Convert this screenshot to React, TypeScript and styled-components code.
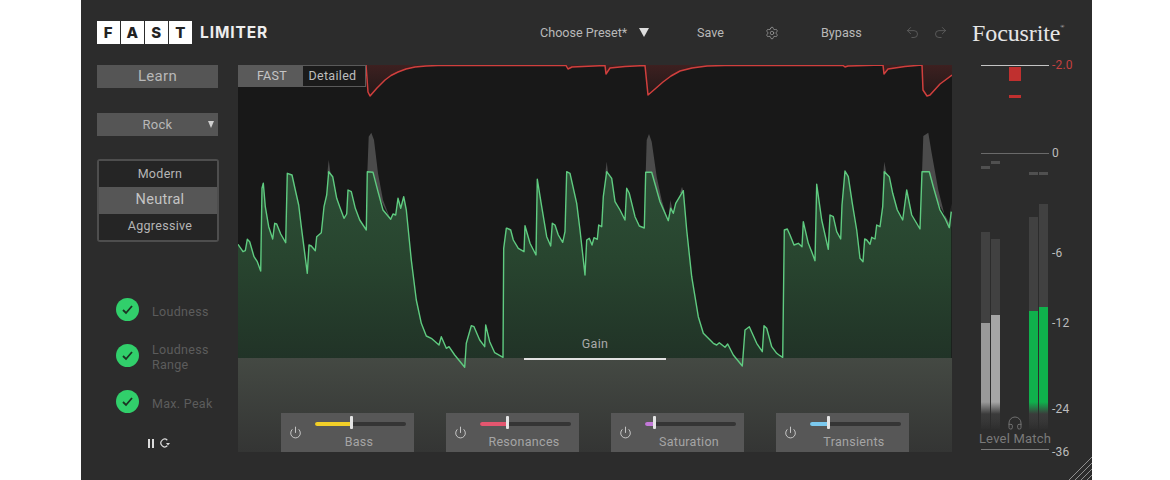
import React from 'react';
import styled, { createGlobalStyle } from 'styled-components';
import { Headphones, Power, Redo2, Settings, Undo2 } from 'lucide-react';

const GlobalStyle = createGlobalStyle`
  body {
    margin: 0;
    background: #ffffff;
    font-family: Roboto, "Liberation Sans", sans-serif;
  }
`;

const Panel = styled.div`
  width: 1011px;
  height: 480px;
  margin-left: 81px;
  background: #2c2c2c;
  color: #bdbdbd;
  overflow: hidden;
  position: relative;
`;

/* ---------- header ---------- */

const Header = styled.header`
  height: 65px;
  display: flex;
  align-items: center;
  padding-left: 16px;
  box-sizing: border-box;
`;

const Logo = styled.div`
  display: flex;
  align-items: center;
  width: 443px;
`;

const Tile = styled.span`
  width: 22.5px;
  height: 23px;
  margin-right: 1.5px;
  background: #ffffff;
  color: #222222;
  font-family: Inter, sans-serif;
  font-weight: 800;
  font-size: 15px;
  line-height: 23px;
  text-align: center;
`;

const LogoWord = styled.span`
  margin-left: 7px;
  color: #eeeeee;
  font-family: Inter, sans-serif;
  font-weight: 700;
  font-size: 15.5px;
  letter-spacing: 0.9px;
`;

const HeaderText = styled.span<{ $width: number }>`
  width: ${(p) => p.$width}px;
  font-size: 12.6px;
  color: #b9b9b9;
  white-space: nowrap;
`;

const PresetArrow = styled.span`
  width: 0;
  height: 0;
  margin-right: 48px;
  border-left: 5px solid transparent;
  border-right: 5px solid transparent;
  border-top: 9px solid #dddddd;
`;

const GearIcon = styled(Settings)`
  width: 14px;
  height: 14px;
  margin-right: 42px;
  color: #a5a5a5;
`;

const HistoryIcon = styled.span`
  display: flex;
  width: 28px;
  color: #626262;
`;

const Brand = styled.span`
  margin-left: 11px;
  padding-top: 1px;
  font-family: "Liberation Serif", serif;
  font-size: 24px;
  color: #e6e6e6;
  letter-spacing: -0.1px;
  sup {
    font-size: 5px;
    vertical-align: 13px;
    line-height: 0;
  }
`;

const Body = styled.div`
  display: flex;
  height: 415px;
`;

/* ---------- left column ---------- */

const LeftColumn = styled.aside`
  width: 157px;
  padding-left: 16px;
  box-sizing: border-box;
`;

const LearnButton = styled.div`
  width: 121px;
  height: 23px;
  background: #555555;
  color: #b8b8b8;
  font-size: 15px;
  line-height: 23px;
  text-align: center;
  letter-spacing: 0.3px;
`;

const GenreSelect = styled.div`
  position: relative;
  width: 121px;
  height: 23px;
  margin-top: 25px;
  background: #555555;
  color: #b8b8b8;
  font-size: 13px;
  line-height: 24px;
  text-align: center;
  letter-spacing: 0.3px;
`;

const GenreArrow = styled.span`
  position: absolute;
  right: 4px;
  top: 8px;
  border-left: 3.5px solid transparent;
  border-right: 3.5px solid transparent;
  border-top: 7px solid #d0d0d0;
`;

const ModeGroup = styled.div`
  width: 122px;
  margin-top: 23px;
  border: 2px solid #4e4e4e;
  border-radius: 3px;
  box-sizing: border-box;
  display: flex;
  flex-direction: column;
`;

const ModeOption = styled.div<{ $active?: boolean }>`
  height: ${(p) => (p.$active ? 27 : 26)}px;
  padding-left: 4px;
  background: ${(p) => (p.$active ? '#565656' : '#252525')};
  color: ${(p) => (p.$active ? '#c4c4c4' : '#b5b5b5')};
  font-size: ${(p) => (p.$active ? 14.5 : 12.5)}px;
  letter-spacing: 0.3px;
  text-align: center;
  line-height: 26px;
  &:last-child {
    line-height: 24px;
  }
`;

const CheckList = styled.div`
  margin-top: 56px;
  margin-left: 19px;
  display: flex;
  flex-direction: column;
  gap: 18px;
`;

const CheckRow = styled.div`
  display: flex;
  align-items: center;
  gap: 13px;
`;

const CheckDot = styled.span`
  width: 23px;
  height: 23px;
  border-radius: 50%;
  background: #31cf6b;
  display: flex;
  align-items: center;
  justify-content: center;
  flex: none;
`;

const CheckLabel = styled.span`
  padding-top: 3px;
  font-size: 12.5px;
  line-height: 15px;
  color: #5c5c5c;
  letter-spacing: 0.3px;
`;

const Transport = styled.div`
  margin-top: 25px;
  margin-left: 51px;
  display: flex;
  align-items: center;
  gap: 5px;
`;

/* ---------- display ---------- */

const Display = styled.main`
  position: relative;
  width: 714px;
  height: 387px;
  background: #181818;
  display: flex;
  flex-direction: column;
  justify-content: flex-end;
`;

const Band = styled.div`
  height: 94px;
  box-sizing: border-box;
  background: linear-gradient(#444943, #343534);
  display: flex;
  align-items: flex-end;
  gap: 32px;
  padding-left: 43px;
`;

const Graph = styled.svg`
  position: absolute;
  left: 0;
  top: 0;
  pointer-events: none;
`;

const ViewTabs = styled.div`
  position: absolute;
  left: 0;
  top: 0;
  display: flex;
  height: 22px;
  background: #5a5a5a;
`;

const ViewTab = styled.span<{ $active?: boolean }>`
  width: 64px;
  box-sizing: border-box;
  font-size: 12.5px;
  line-height: 20px;
  text-align: center;
  letter-spacing: 0.3px;
  padding: ${(p) => (p.$active ? '0 3px 0 0' : '0 0 0 4px')};
  color: ${(p) => (p.$active ? '#bdbdbd' : '#c5c5c5')};
  background: ${(p) => (p.$active ? '#1b1b1b' : 'none')};
  border: 1px solid #5a5a5a;
`;

const GainMarker = styled.div`
  position: absolute;
  left: 286px;
  top: 271px;
  width: 142px;
  height: 22px;
  border-bottom: 2px solid #e2e2e2;
  font-size: 12.5px;
  line-height: 16px;
  text-align: center;
  color: #aaaaaa;
  letter-spacing: 0.3px;
`;

const Card = styled.div`
  width: 133px;
  height: 39px;
  background: #575757;
  display: flex;
  align-items: center;
  box-sizing: border-box;
  padding-left: 8px;
`;

const PowerIcon = styled(Power)`
  width: 13px;
  height: 13px;
  color: #d5d5d5;
  flex: none;
`;

const CardBody = styled.div`
  align-self: flex-start;
  width: 91px;
  margin-left: 13px;
  padding-top: 9px;
  display: flex;
  flex-direction: column;
  align-items: stretch;
`;

const SliderTrack = styled.div`
  position: relative;
  height: 4px;
  background: #353535;
  border-radius: 2px;
`;

const SliderFill = styled.div<{ $color: string }>`
  height: 100%;
  background: ${(p) => p.$color};
  border-radius: 2px 0 0 2px;
`;

const SliderHandle = styled.div`
  position: absolute;
  top: -6px;
  width: 3px;
  height: 13px;
  margin-left: -1px;
  background: #e4e4e4;
  border-radius: 1px;
`;

const CardLabel = styled.div`
  margin-top: 8px;
  margin-left: -3px;
  font-size: 12.5px;
  line-height: 15px;
  text-align: center;
  letter-spacing: 0.3px;
  color: #a5a5a5;
`;

/* ---------- meters ---------- */

const MeterColumn = styled.aside`
  width: 140px;
  margin-top: -8px;
  padding-left: 29px;
  box-sizing: border-box;
`;

const ScaleRow = styled.div<{ $top?: number }>`
  display: flex;
  align-items: center;
  height: 16px;
  margin-top: ${(p) => p.$top || 0}px;
`;

const ScaleLine = styled.div<{ $color: string }>`
  width: 68px;
  height: 1px;
  background: ${(p) => p.$color};
`;

const ScaleValue = styled.span<{ $color?: string }>`
  margin-left: 3px;
  font-size: 12px;
  letter-spacing: 0.2px;
  color: ${(p) => p.$color || '#bdbdbd'};
`;

const ReductionBar = styled.div<{ $height: number; $top: number }>`
  width: 12px;
  height: ${(p) => p.$height}px;
  margin: ${(p) => p.$top}px 0 0 28px;
  background: #c0302f;
`;

const MeterStage = styled.div`
  position: relative;
  display: flex;
  height: 264px;
  margin-top: 5px;
`;

const MeterPair = styled.div<{ $width: number }>`
  display: flex;
  align-items: flex-start;
  gap: 1px;
  width: ${(p) => p.$width}px;
`;

const MeterBar = styled.div<{ $top: number }>`
  position: relative;
  width: 9px;
  height: calc(100% - ${(p) => p.$top}px);
  margin-top: ${(p) => p.$top}px;
  background: linear-gradient(#414141 0, #414141 calc(100% - 28px), rgba(65, 65, 65, 0) 100%);
`;

const MeterPeak = styled.div<{ $top: number }>`
  position: absolute;
  left: 0;
  top: ${(p) => p.$top}px;
  width: 100%;
  height: 3px;
  background: #505050;
`;

const MeterFill = styled.div<{ $top: number; $color: string }>`
  position: absolute;
  left: 0;
  right: 0;
  bottom: 0;
  top: ${(p) => p.$top}px;
  background: linear-gradient(
    ${(p) => p.$color} 0,
    ${(p) => p.$color} calc(100% - 28px),
    rgba(60, 60, 60, 0.7) calc(100% - 16px),
    rgba(60, 60, 60, 0) 100%
  );
`;

const ScaleColumn = styled.div`
  position: absolute;
  left: 71px;
  top: 0;
  bottom: 0;
`;

const Tick = styled.span<{ $top: number }>`
  position: absolute;
  left: 0;
  top: ${(p) => p.$top}px;
  font-size: 12px;
  line-height: 14px;
  letter-spacing: 0.2px;
  color: #bdbdbd;
  white-space: nowrap;
`;

const LevelMatch = styled.div`
  position: absolute;
  left: -2px;
  top: 249px;
  width: 72px;
  display: flex;
  flex-direction: column;
  align-items: center;
  color: #7a7a7a;
  font-size: 13px;
  line-height: 16px;
  letter-spacing: 0.2px;
  white-space: nowrap;
`;

const LevelLine = styled.div`
  width: 68px;
  height: 1px;
  margin-top: 2px;
  background: #7a7a7a;
`;

const ResizeGrip = styled.svg`
  position: absolute;
  right: 0;
  bottom: 0;
`;

/* ---------- graph data, read off the screenshot at 3x ---------- */

type Pt = [number, number];

const toDisplay = (pts: Pt[], ox: number): Pt[] =>
  pts.map(([x, y]) => [ox + x / 3, y / 3 - 5] as Pt);

const green: Pt[] = [
  ...toDisplay(
    [
      [0, 553], [15, 575], [22, 572], [28, 538], [35, 545], [48, 590], [58, 605], [68, 633], [72, 385], [76, 370],
      [82, 440], [92, 500], [104, 537], [110, 490], [116, 492], [128, 522], [143, 548], [148, 340], [162, 345],
      [172, 390], [182, 435], [190, 500], [208, 640], [213, 555], [220, 558], [232, 572], [236, 530], [250, 518],
      [258, 440], [266, 405], [272, 335], [284, 350], [296, 415], [305, 440], [318, 475], [326, 462], [330, 390],
      [340, 395], [352, 445], [365, 480], [385, 510], [388, 335], [405, 337], [420, 395], [435, 450], [458, 478],
      [465, 462], [473, 465], [480, 415], [488, 445], [497, 410], [505, 450], [520, 600], [535, 720], [550, 790],
      [565, 828], [580, 835], [603, 855], [610, 830], [625, 865], [633, 860], [650, 885], [680, 922], [685, 850],
      [700, 797], [708, 800], [725, 840], [740, 860], [743, 795], [755, 845], [770, 878], [795, 892], [797, 565],
      [805, 505],
    ],
    0,
  ),
  ...toDisplay(
    [
      [22, 505], [32, 510], [40, 540], [55, 565], [72, 575], [75, 497], [90, 550], [108, 585], [112, 358], [125, 440],
      [140, 530], [152, 558], [157, 490], [165, 495], [175, 525], [188, 547], [195, 515], [200, 335], [210, 340],
      [230, 430], [240, 510], [255, 645], [260, 540], [268, 535], [276, 555], [282, 533], [292, 538], [296, 495],
      [305, 500], [310, 410], [320, 335], [335, 355], [345, 425], [360, 450], [375, 480], [380, 385], [388, 400],
      [405, 470], [418, 498], [433, 504], [437, 337], [455, 337], [480, 425], [505, 482], [512, 445], [520, 460],
      [527, 430], [550, 392], [560, 510], [575, 650], [595, 770], [610, 820], [640, 850], [650, 855], [658, 848],
      [675, 862], [683, 852], [700, 885], [727, 918], [735, 810], [748, 800], [770, 850], [787, 875], [792, 797],
      [800, 805], [815, 860], [830, 880], [840, 887],
    ],
    262,
  ),
  ...toDisplay(
    [
      [128, 892], [133, 510], [142, 507], [150, 525], [162, 555], [175, 550], [186, 560], [190, 485], [205, 550],
      [215, 575], [225, 602], [230, 373], [245, 480], [265, 568], [270, 465], [280, 470], [290, 515], [302, 537],
      [306, 435], [315, 333], [325, 350], [337, 430], [350, 510], [360, 595], [369, 605], [374, 537], [380, 540],
      [390, 553], [395, 532], [405, 537], [410, 495], [420, 500], [428, 440], [433, 335], [448, 350], [458, 400],
      [472, 450], [488, 480], [500, 390], [515, 465], [540, 507], [546, 335], [568, 335], [580, 380], [600, 450],
      [615, 475], [628, 503], [634, 455],
    ],
    502,
  ),
];

const peaks: Pt[][] = [
  toDisplay([[388, 340], [392, 230], [400, 218], [408, 240], [420, 340], [435, 420], [458, 480]], 0),
  toDisplay([[268, 340], [272, 300], [278, 345]], 0),
  toDisplay([[437, 340], [440, 240], [447, 222], [455, 245], [470, 350], [485, 420], [505, 485]], 262),
  toDisplay([[316, 340], [320, 305], [325, 345]], 262),
  toDisplay([[505, 480], [511, 420], [520, 460]], 262),
  toDisplay([[540, 400], [546, 380], [552, 400]], 262),
  toDisplay([[546, 340], [550, 228], [565, 218], [575, 280], [595, 390], [615, 470], [628, 505], [634, 430], [634, 500]], 502),
  toDisplay([[430, 340], [433, 305], [440, 345]], 502),
];

// red gain reduction curve, page pixels minus the display origin
const red: Pt[] = (
  [
    [366, 65], [368, 92], [370, 96], [377, 88], [385, 80], [391, 75.5], [398, 72], [406, 69], [415, 67], [426, 66], [438, 65.5],
    [566, 65.5], [568, 69], [572, 67], [605, 65.5], [606, 74], [610, 68], [625, 66.5], [645, 65.5], [648, 95], [655, 89],
    [663, 82], [671, 76], [680, 71], [692, 68], [707, 66], [725, 65.5], [843, 65.5], [845, 67], [848, 66], [883, 65],
    [884, 74], [888, 69], [905, 66.5], [922, 65], [923, 90], [927, 96], [930, 95], [940, 84], [952, 75],
  ] as Pt[]
).map(([x, y]) => [x - 238, y - 65] as Pt);

const line = (pts: Pt[]) => pts.map(([x, y]) => `${x.toFixed(1)},${y.toFixed(1)}`).join(' ');

const area = (pts: Pt[], base: number) =>
  `${pts[0][0].toFixed(1)},${base} ${line(pts)} ${pts[pts.length - 1][0].toFixed(1)},${base}`;

const sliders = [
  { name: 'Bass', color: '#f2cf28', value: 36 },
  { name: 'Resonances', color: '#e4566f', value: 27 },
  { name: 'Saturation', color: '#c279d8', value: 9 },
  { name: 'Transients', color: '#7bc9ef', value: 18 },
];

const App: React.FC = () => (
  <>
    <GlobalStyle />
    <Panel>
      <Header>
        <Logo>
          <Tile>F</Tile>
          <Tile>A</Tile>
          <Tile>S</Tile>
          <Tile>T</Tile>
          <LogoWord>LIMITER</LogoWord>
        </Logo>
        <HeaderText $width={99}>Choose Preset*</HeaderText>
        <PresetArrow />
        <HeaderText $width={68}>Save</HeaderText>
        <GearIcon strokeWidth={1.2} />
        <HeaderText $width={84}>Bypass</HeaderText>
        <HistoryIcon>
          <Undo2 size={15} strokeWidth={1.3} />
        </HistoryIcon>
        <HistoryIcon>
          <Redo2 size={15} strokeWidth={1.3} />
        </HistoryIcon>
        <Brand>
          Focusrite<sup>®</sup>
        </Brand>
      </Header>
      <Body>
        <LeftColumn>
          <LearnButton>Learn</LearnButton>
          <GenreSelect>
            Rock
            <GenreArrow />
          </GenreSelect>
          <ModeGroup>
            <ModeOption>Modern</ModeOption>
            <ModeOption $active>Neutral</ModeOption>
            <ModeOption>Aggressive</ModeOption>
          </ModeGroup>
          <CheckList>
            {['Loudness', 'Loudness Range', 'Max. Peak'].map((label) => (
              <CheckRow key={label}>
                <CheckDot>
                  <svg width="13" height="11" viewBox="0 0 13 11" fill="none">
                    <path d="M2 6l3 3 6-7" stroke="#1c3323" strokeWidth="1.8" />
                  </svg>
                </CheckDot>
                <CheckLabel>
                  {label === 'Loudness Range' ? (
                    <>
                      Loudness
                      <br />
                      Range
                    </>
                  ) : (
                    label
                  )}
                </CheckLabel>
              </CheckRow>
            ))}
          </CheckList>
          <Transport>
            <svg width="6" height="9" viewBox="0 0 6 9" fill="#dcdcdc">
              <rect x="0" y="0" width="2" height="9" />
              <rect x="4" y="0" width="2" height="9" />
            </svg>
            <svg width="11" height="10" viewBox="0 0 11 10" fill="none">
              <path d="M8.3 2.2A3.8 3.8 0 1 0 8.3 7.8" stroke="#dcdcdc" strokeWidth="1.2" />
              <path d="M7 5h4L9 7.5z" fill="#dcdcdc" />
            </svg>
          </Transport>
        </LeftColumn>
        <Display>
          <Band>
            {sliders.map((s) => (
              <Card key={s.name}>
                <PowerIcon strokeWidth={1.6} />
                <CardBody>
                  <SliderTrack>
                    <SliderFill $color={s.color} style={{ width: s.value }} />
                    <SliderHandle style={{ left: s.value }} />
                  </SliderTrack>
                  <CardLabel>{s.name}</CardLabel>
                </CardBody>
              </Card>
            ))}
          </Band>
          <Graph width="714" height="387" viewBox="0 0 714 387">
            <defs>
              <linearGradient id="greenFill" x1="0" y1="70" x2="0" y2="293" gradientUnits="userSpaceOnUse">
                <stop offset="0" stopColor="#2f5239" />
                <stop offset="0.55" stopColor="#28452f" />
                <stop offset="1" stopColor="#213327" />
              </linearGradient>
              <linearGradient id="redFill" x1="0" y1="0" x2="0" y2="32" gradientUnits="userSpaceOnUse">
                <stop offset="0" stopColor="#3d2020" />
                <stop offset="1" stopColor="#211818" />
              </linearGradient>
              <clipPath id="aboveBand">
                <rect x="0" y="0" width="714" height="293" />
              </clipPath>
            </defs>
            {peaks.map((p, i) => (
              <polygon key={i} points={line(p)} fill="#4b4b4b" />
            ))}
            <polygon points={area(green, 293)} fill="url(#greenFill)" clipPath="url(#aboveBand)" />
            <polyline points={line(green)} fill="none" stroke="#5fcb80" strokeWidth="1.4" strokeLinejoin="round" />
            <polygon points={area(red, 0)} fill="url(#redFill)" />
            <polyline points={line(red)} fill="none" stroke="#d03f3d" strokeWidth="1.5" strokeLinejoin="round" />
          </Graph>
          <ViewTabs>
            <ViewTab>FAST</ViewTab>
            <ViewTab $active>Detailed</ViewTab>
          </ViewTabs>
          <GainMarker>Gain</GainMarker>
        </Display>
        <MeterColumn>
          <ScaleRow>
            <ScaleLine $color="#c4c4c4" />
            <ScaleValue $color="#c4403f">-2.0</ScaleValue>
          </ScaleRow>
          <ReductionBar $height={14} $top={-6} />
          <ReductionBar $height={3} $top={14} />
          <ScaleRow $top={47}>
            <ScaleLine $color="#6a6a6a" />
            <ScaleValue>0</ScaleValue>
          </ScaleRow>
          <MeterStage>
            <MeterPair $width={48}>
              <MeterBar $top={66}>
                <MeterPeak $top={-66} />
                <MeterFill $top={91} $color="#9a9a9a" />
              </MeterBar>
              <MeterBar $top={73}>
                <MeterPeak $top={-78} />
                <MeterFill $top={76} $color="#a6a6a6" />
              </MeterBar>
            </MeterPair>
            <MeterPair $width={20}>
              <MeterBar $top={51}>
                <MeterPeak $top={-45} />
                <MeterFill $top={94} $color="#0fb14c" />
              </MeterBar>
              <MeterBar $top={38}>
                <MeterPeak $top={-32} />
                <MeterFill $top={103} $color="#0fb14c" />
              </MeterBar>
            </MeterPair>
            <ScaleColumn>
              <Tick $top={80}>-6</Tick>
              <Tick $top={150}>-12</Tick>
              <Tick $top={236}>-24</Tick>
              <Tick $top={279}>-36</Tick>
            </ScaleColumn>
            <LevelMatch>
              <Headphones size={16} strokeWidth={1.3} />
              Level Match
              <LevelLine />
            </LevelMatch>
          </MeterStage>
        </MeterColumn>
      </Body>
      <ResizeGrip width="23" height="23" viewBox="0 0 23 23" stroke="#8f8f8f" strokeWidth="1">
        <path d="M0 23L23 0M6 23L23 6M12 23L23 12M18 23L23 18" />
      </ResizeGrip>
    </Panel>
  </>
);

export default App;
